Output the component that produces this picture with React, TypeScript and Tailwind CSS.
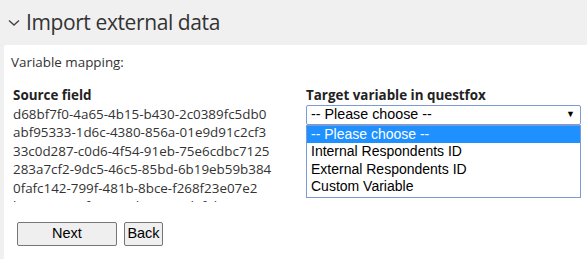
import React from "react";

const sources = [
  "d68bf7f0-4a65-4b15-b430-2c0389fc5db0",
  "abf95333-1d6c-4380-856a-01e9d91c2cf3",
  "33c0d287-c0d6-4f54-91eb-75e6cdbc7125",
  "283a7cf2-9dc5-46c5-85bd-6b19eb59b384",
  "0fafc142-799f-481b-8bce-f268f23e07e2",
  "b1e4c9a2-7f31-4c0d-9a8e-5d2f6b3c1e90",
];

const options = [
  "-- Please choose --",
  "Internal Respondents ID",
  "External Respondents ID",
  "Custom Variable",
];

export default function App() {
  return (
    <div className="w-[587px] h-[259px] overflow-hidden bg-[#f0f0f0] text-[#333] font-['Open_Sans',sans-serif]">
      <div className="h-[45px] flex items-center pl-[8px] gap-[6px]">
        <svg width="12" height="8" viewBox="0 0 12 8" className="mt-[1px]">
          <path d="M1 1.5 L6 6 L11 1.5" fill="none" stroke="#444" strokeWidth="1.4" />
        </svg>
        <h2 className="text-[21px] tracking-[-0.4px] leading-none text-[#333]">Import external data</h2>
      </div>
      <div className="ml-[4px] bg-white rounded-tl-[2px] h-[214px] pl-[9px] pt-[8px]">
        <p className="text-[13.4px] leading-[18px] -ml-[2px]">Variable mapping:</p>
        <div className="relative mt-[15px] flex">
          <div className="w-[293px] shrink-0">
            <div className="text-[13.4px] leading-[18.5px] font-bold text-[#222]">Source field</div>
            <div className="h-[97.5px] overflow-hidden">
              {sources.map((s) => (
                <div key={s} className="text-[13.4px] leading-[18.5px]">
                  {s}
                </div>
              ))}
            </div>
          </div>
          <div className="w-[275px]">
            <div className="text-[13.4px] leading-[18.5px] font-bold text-[#222]">Target variable in questfox</div>
            <div className="relative">
              <div className="h-[20px] border border-[#7a9cd3] rounded-[2px] flex items-center justify-between pl-[4px] pr-[5px] font-['Liberation_Sans',sans-serif] text-[14.3px] text-black">
                <span>-- Please choose --</span>
                <span className="text-[9px]">▼</span>
              </div>
              <ul className="absolute left-0 right-0 top-[20px] bg-white border border-[#7a9cd3] font-['Liberation_Sans',sans-serif] text-[14px] leading-[17.5px] text-black pb-[1px]">
                {options.map((o, i) => (
                  <li key={o} className={i === 0 ? "bg-[#1e90ff] text-white px-[4px]" : "px-[4px]"}>
                    {o}
                  </li>
                ))}
              </ul>
            </div>
          </div>
        </div>
        <div className="flex gap-[7px] mt-[20px] ml-[4px] font-['Liberation_Sans',sans-serif] text-[14.5px] text-black">
          <button className="w-[100px] h-[24px] border border-[#767676] rounded-[2px] bg-[#efefef]">Next</button>
          <button className="w-[39px] h-[24px] border border-[#767676] rounded-[2px] bg-[#efefef]">Back</button>
        </div>
      </div>
    </div>
  );
}
